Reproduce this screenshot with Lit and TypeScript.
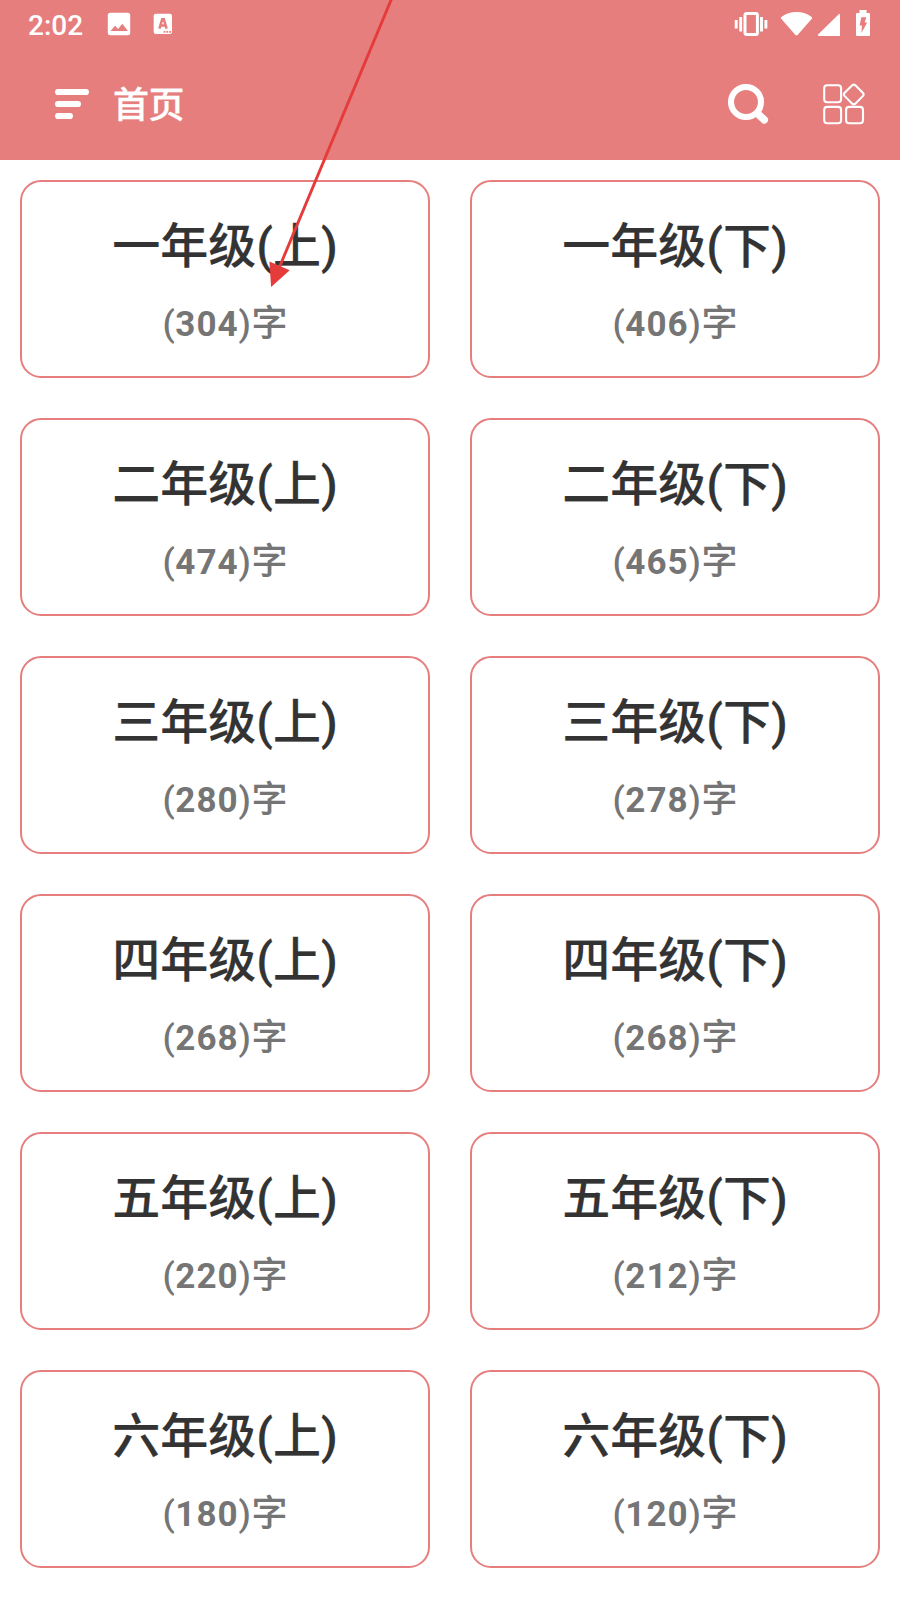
import { LitElement, html, css, svg } from "lit";
import { customElement, property } from "lit/decorators.js";

@customElement("grade-card")
class GradeCard extends LitElement {
  @property() name = "";
  @property({ type: Number }) count = 0;

  static styles = css`
    :host {
      display: flex;
      flex-direction: column;
      align-items: center;
      box-sizing: border-box;
      height: 198px;
      padding-top: 30px;
      border: 2px solid #e67e7e;
      border-radius: 21px;
      background: #fff;
    }
    .title {
      font-size: 48px;
      line-height: 70px;
      font-weight: 500;
      color: #333;
      white-space: nowrap;
      -webkit-text-stroke: 0.2px #333;
    }
    .count {
      margin-top: 16px;
      font-size: 35.5px;
      line-height: 52px;
      font-weight: 500;
      letter-spacing: 0.5px;
      color: #757575;
      white-space: nowrap;
    }
    .number {
      font-size: 35px;
      font-weight: 700;
      letter-spacing: 1px;
    }
    .unit {
      font-size: 36px;
      line-height: 0;
      letter-spacing: 0;
    }
  `;

  render() {
    return html`
      <div class="title">${this.name}</div>
      <div class="count">(<span class="number">${this.count}</span>)<span class="unit">字</span></div>
    `;
  }
}

@customElement("app-root")
class AppRoot extends LitElement {
  static styles = css`
    :host {
      display: block;
      position: relative;
      width: 900px;
      height: 1600px;
      overflow: hidden;
      background: #fff;
      font-family: Roboto, "Noto Sans CJK SC", sans-serif;
    }
    .header {
      height: 160px;
      background: #e67e7e;
      color: #fff;
    }
    svg {
      display: block;
      flex: none;
    }
    .status {
      display: flex;
      align-items: center;
      height: 48px;
      padding: 0 28px;
    }
    .time {
      width: 78px;
      font-size: 28px;
      line-height: 48px;
      font-weight: 500;
      padding-top: 3px;
      box-sizing: border-box;
      white-space: nowrap;
    }
    .spacer {
      flex: 1;
    }
    .bar {
      display: flex;
      align-items: center;
      height: 112px;
      padding: 0 34px 0 54px;
    }
    .heading {
      margin-left: 23px;
      padding-top: 4px;
      font-size: 36px;
      line-height: 108px;
      font-weight: 500;
      letter-spacing: -0.6px;
      -webkit-text-stroke: 0.3px #fff;
    }
    .search {
      margin-right: 54px;
    }
    .grid {
      display: grid;
      grid-template-columns: 410px 410px;
      gap: 40px;
      padding: 20px;
    }
    .arrow {
      position: absolute;
      left: 0;
      top: 0;
    }
  `;

  private grades: [string, number][] = [
    ["一年级(上)", 304], ["一年级(下)", 406],
    ["二年级(上)", 474], ["二年级(下)", 465],
    ["三年级(上)", 280], ["三年级(下)", 278],
    ["四年级(上)", 268], ["四年级(下)", 268],
    ["五年级(上)", 220], ["五年级(下)", 212],
    ["六年级(上)", 180], ["六年级(下)", 120],
  ];

  render() {
    return html`
      <div class="header">
        <div class="status">
          <span class="time">2:02</span>
          <svg width="66" height="48" viewBox="106 0 66 48">
            <rect x="107.8" y="12.8" width="22.4" height="22.4" rx="2.5" fill="#fff" />
            <path d="M110.5 31l4.6-5.2 3 3.2 4.2-5.3 5.6 7.3z" fill="#e67e7e" />
            <rect x="153.7" y="13.7" width="18.3" height="20.3" rx="2" fill="#fff" />
            <path d="M159.4 28.6L162.2 19.3h1.6l2.8 9.3M160.2 25.6h5.4" fill="none" stroke="#e67e7e" stroke-width="2.5" />
            <path d="M163.6 31h1.8v1.8h-1.8zM166.4 31h1.8v1.8h-1.8zM169.2 31h1.8v1.8h-1.8z" fill="#e67e7e" />
          </svg>
          <div class="spacer"></div>
          <svg width="138" height="48" viewBox="734 0 138 48">
            <rect x="745" y="13.5" width="12.4" height="21" rx="1.5" fill="none" stroke="#fff" stroke-width="3" />
            <path d="M736.2 20v8.4M740.7 17v14.4M761.5 17v14.4M765.9 20v8.4" fill="none" stroke="#fff" stroke-width="2.9" />
            <path d="M781 17.2Q787.5 12 796.5 12T812 17.2V18.6L797.8 34.8Q796.5 36.2 795.2 34.8L781 18.6z" fill="#fff" />
            <path d="M839 14h1v22h-21.4q-1.2-.8-.3-1.8z" fill="#fff" />
            <path d="M859.5 10h7v3H869q1 0 1 1v21q0 1-1 1h-12q-1 0-1-1V14q0-1 1-1h2.5z" fill="#fff" />
            <path d="M861.3 17.2h5l-1.6 5.4h2.5L861.4 33l.5-7.4h-2.3z" fill="#e67e7e" />
          </svg>
        </div>
        <div class="bar">
          <svg width="36" height="34" viewBox="54 87 36 34">
            <path d="M58.1 92h27.8M58.1 104h19.8M58.1 116h11.8" stroke="#fff" stroke-width="6.2" stroke-linecap="round" />
          </svg>
          <span class="heading">首页</span>
          <div class="spacer"></div>
          <svg class="search" width="42" height="42" viewBox="727 83 42 42">
            <circle cx="746" cy="102" r="15" fill="none" stroke="#fff" stroke-width="6.1" />
            <path d="M758 114l6.2 5.8" stroke="#fff" stroke-width="7.6" stroke-linecap="round" />
          </svg>
          <svg width="43" height="42" viewBox="823 83 43 42" fill="none" stroke="#fff" stroke-width="2.1">
            <rect x="824.2" y="85.2" width="16.9" height="17" rx="3" />
            <rect x="824.2" y="106.9" width="16.9" height="16.3" rx="3" />
            <rect x="846.1" y="106.9" width="16.9" height="16.3" rx="3" />
            <path d="M852.2 85.3q1.6-1.2 3.2 0l7.6 7.6q1.2 1.5 0 3l-7.6 7.8q-1.6 1.2-3.2 0l-7.7-7.8q-1.2-1.5 0-3z" />
          </svg>
        </div>
      </div>
      <div class="grid">
        ${this.grades.map(([name, count]) => html`<grade-card .name=${name} .count=${count}></grade-card>`)}
      </div>
      <svg class="arrow" width="400" height="300" viewBox="0 0 400 300">
        ${svg`<path d="M391.5 -1L279.5 267" stroke="#e53b3b" stroke-width="2.9" />
        <path d="M269.4 261.5L289.7 270.3L271.1 287z" fill="#e53b3b" />`}
      </svg>
    `;
  }
}
